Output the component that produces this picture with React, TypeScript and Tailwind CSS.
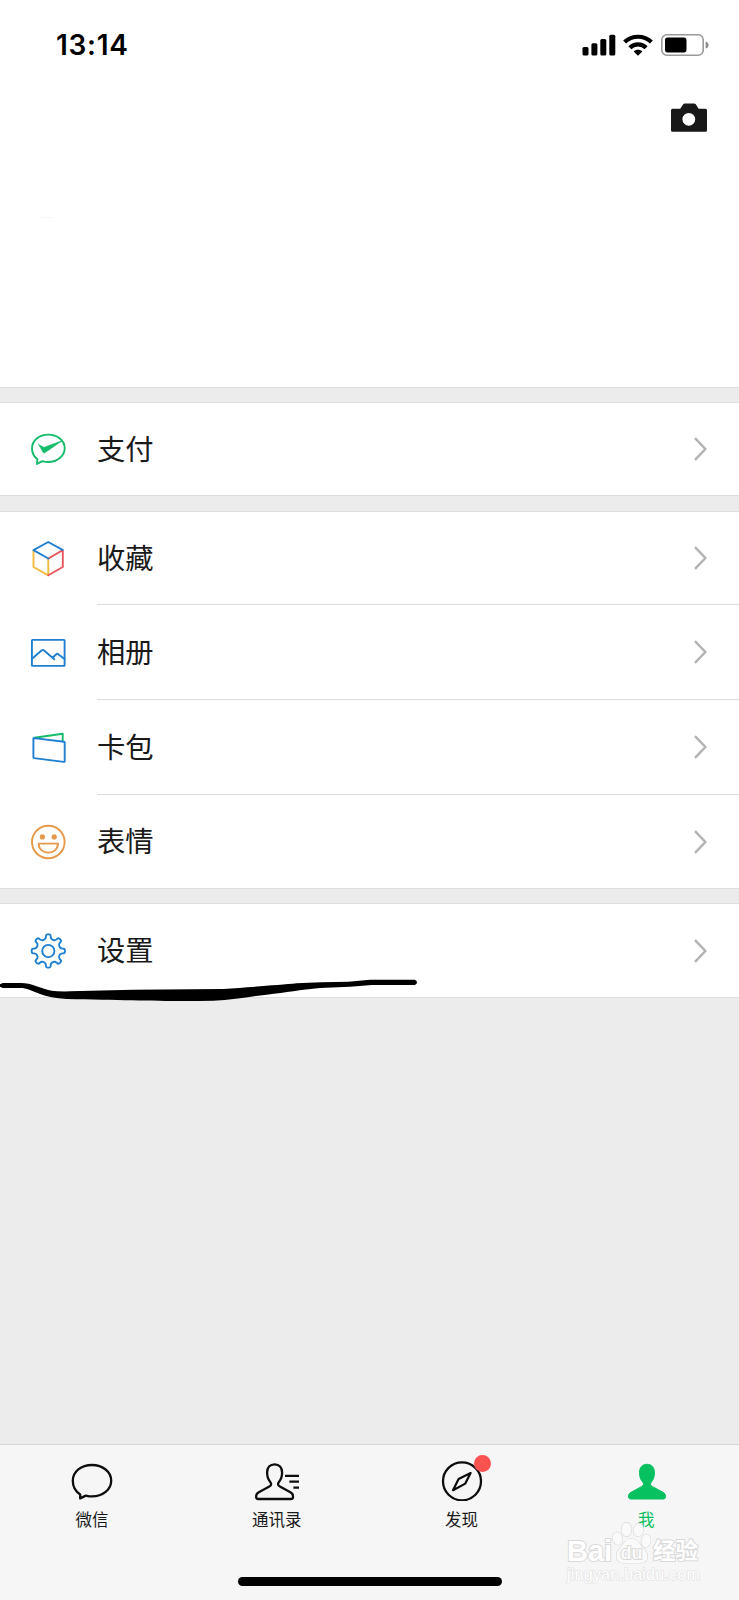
import type { ReactNode } from "react";
import clsx from "clsx";

const BLUE = "#1f7fd0";
const GREEN = "#14bb69";

// Outline of the settings cog: eight rounded teeth around (18.3, 18)
function cogPath() {
  const at = (r: number, deg: number) => {
    const a = (deg * Math.PI) / 180;
    return `${(18.3 + r * Math.cos(a)).toFixed(2)} ${(18 + r * Math.sin(a)).toFixed(2)}`;
  };
  let d = `M${at(12.2, -17)}`;
  for (let t = 0; t < 360; t += 45) {
    d += `Q${at(12.8, t - 11)} ${at(14.3, t - 9.5)}`;
    d += `Q${at(16.6, t - 9)} ${at(16.6, t - 3)}L${at(16.6, t + 3)}`;
    d += `Q${at(16.6, t + 9)} ${at(14.3, t + 9.5)}`;
    d += `Q${at(12.8, t + 11)} ${at(12.2, t + 17)}Q${at(11.9, t + 22.5)} ${at(12.2, t + 28)}`;
  }
  return d + "Z";
}

function RowIcon({ children, color }: { children: ReactNode; color?: string }) {
  return (
    <svg
      viewBox="0 0 36 36"
      className="w-9 h-9 shrink-0"
      fill="none"
      stroke={color}
      strokeWidth="1.9"
      strokeLinejoin="round"
      strokeLinecap="round"
    >
      {children}
    </svg>
  );
}

const payIcon = (
  <RowIcon color={GREEN}>
    <path d="M7.4 28.3C3.9 25.6 2 21.7 2 17.5C2 9.6 9.3 3.6 18.3 3.6s16.4 6 16.4 13.7s-7.4 13.7-16.4 13.7c-2.2 0-4.1-.3-5.9-.9L7 32.9z" />
    <path d="M8.9 13.6l4.3 2.5c.5.3 1 .3 1.5.1L32.500 9.600L15 21.600c-.9.6-1.500.5-2-.4z" fill={GREEN} strokeWidth=".7" />
  </RowIcon>
);

const favIcon = (
  <RowIcon>
    <path d="M3.5 9.8V26L18.3 34.3V17.7" stroke="#f2bc3f" />
    <path d="M18.3 34.3L32.8 26V9.1L18.3 17.5" stroke="#e8565d" />
    <path d="M18.3 17.5L3.5 9.1L18.2 1L32.6 8.9" stroke={BLUE} />
  </RowIcon>
);

const albumIcon = (
  <RowIcon color={BLUE}>
    <rect x="1.9" y="4.9" width="32.7" height="26" rx=".6" />
    <path d="M2 23.7L11.8 15.2q1-.7 2 0L24.3 24.3M22.5 22.8L26.3 19.2q1-.8 2 0L34.5 24.1" />
  </RowIcon>
);

const cardIcon = (
  <RowIcon color={BLUE}>
    <path d="M4.5 7.7L32.7 3.7V11.4" stroke={GREEN} />
    <path d="M3.4 8.8q0-.8.8-.7L34 11.8q.7.1.7.8V31.1q0 .9-.9.8L4.1 28.1q-.7-.1-.7-.8z" />
  </RowIcon>
);

const stickerIcon = (
  <RowIcon color="#e6994a">
    <circle cx="18.3" cy="18" r="16.3" />
    <circle cx="12.4" cy="12.9" r="2.6" fill="#e6994a" stroke="none" />
    <circle cx="24.2" cy="12.9" r="2.6" fill="#e6994a" stroke="none" />
    <path d="M8.6 19.6H28c0 5.4-4.3 9-9.7 9s-9.7-3.6-9.7-9z" />
  </RowIcon>
);

const settingsIcon = (
  <RowIcon color={BLUE}>
    <path d={cogPath()} />
    <circle cx="18.3" cy="18" r="6.1" />
  </RowIcon>
);

const groups = [
  [{ label: "支付", icon: payIcon, height: "h-[92px]" }],
  [
    { label: "收藏", icon: favIcon, height: "h-[93px]" },
    { label: "相册", icon: albumIcon, height: "h-[95px]" },
    { label: "卡包", icon: cardIcon, height: "h-[95px]" },
    { label: "表情", icon: stickerIcon, height: "h-[93px]" },
  ],
  [{ label: "设置", icon: settingsIcon, height: "h-[93px]" }],
];

const gaps = ["h-4", "h-[17px]", "h-4"];

function MenuRow({ label, icon, height, last }: { label: string; icon: ReactNode; height: string; last: boolean }) {
  return (
    <div className={clsx("flex items-stretch pl-[30px]", height)}>
      <div className="flex items-center w-[67px]">{icon}</div>
      <div className={clsx("flex flex-1 items-center justify-between pr-8", !last && "border-b border-[#dcdcdc]")}>
        <span className="pb-0.5 text-[28.3px] leading-none text-[#1a1a1a]">{label}</span>
        <svg viewBox="0 0 14 24" className="w-3.5 h-6" fill="none" stroke="#b2b2b2" strokeWidth="2.4">
          <path d="M2 1.2L12.4 12L2 22.8" />
        </svg>
      </div>
    </div>
  );
}

function StatusBar() {
  return (
    <div className="flex items-center justify-between h-[88px] pl-14 pr-[30px] pt-px">
      <span className="font-[Inter] text-[28px] font-semibold leading-none text-black tracking-[0.7px]">13:14</span>
      <div className="flex items-center">
        <svg viewBox="0 0 34 22" className="w-[34px] h-[22px]">
          <rect x=".5" y="13" width="6" height="8.5" rx="1.5" />
          <rect x="9.4" y="9.3" width="6" height="12.2" rx="1.5" />
          <rect x="18.3" y="5" width="6" height="16.5" rx="1.5" />
          <rect x="27.3" y=".7" width="6" height="20.8" rx="1.5" />
        </svg>
        <svg viewBox="0 0 30 22" className="w-[30px] h-[22px] ml-[7px]" fill="none" stroke="#000" strokeWidth="4.2">
          <path d="M1.6 8C9 1 21 1 28.4 8" />
          <path d="M6.9 13.7C11.4 9.3 18.6 9.3 23.1 13.7" />
          <path d="M10.6 17.4C13 15.2 17 15.2 19.4 17.4L15 21.8z" fill="#000" stroke="none" />
        </svg>
        <svg viewBox="0 0 48 22" className="w-12 h-[22px] ml-2">
          <rect x=".8" y=".8" width="41.4" height="20.4" rx="5" fill="none" stroke="#999" strokeWidth="1.6" />
          <rect x="4" y="3.6" width="21.5" height="14.8" rx="2.6" />
          <path d="M44.6 7.6c4 1 4 6 0 7z" fill="#8c8c8c" />
        </svg>
      </div>
    </div>
  );
}

const person =
  "M24 3.3c-4.7 0-7.5 3.3-7.5 8.2c0 4.300 1.100 7 3 9.200c1.700 2 1.300 3.700-.8 4.800L8.200 31.200c-2 1.100-2.600 2.100-2.600 3.900v.9q0 2 2 2h32.800q2 0 2-2v-.9c0-1.800-.6-2.800-2.600-3.900L29.300 25.500c-2.100-1.100-2.500-2.800-.8-4.800c1.900-2.200 3-4.900 3-9.200c0-4.900-2.800-8.200-7.500-8.200z";

const tabs = [
  {
    label: "微信",
    icon: <path d="M12.2 33.4C7.5 30.5 4.8 25.6 4.8 19.8C4.8 10.6 13.2 4 24 4s19.2 6.8 19.2 15.7S34.8 35.4 24 35.4c-1.8 0-3.6-.2-5.2-.6q-.8-.2-1.5.1L12.2 37.4z" />,
  },
  {
    label: "通讯录",
    icon: (
      <>
        <path d={person} transform="translate(-2.4 0)" />
        <path d="M32 14.8H46M36.4 20.7H46M40.4 26.7H46" />
      </>
    ),
  },
  {
    label: "发现",
    badge: true,
    icon: (
      <>
        <circle cx="24" cy="20.3" r="19" />
        <path d="M32.6 12L20.6 18.1L15 29.2L27.3 22.6z" strokeWidth="2.2" />
      </>
    ),
  },
  { label: "我", active: true, icon: <path d={person} fill="#07c160" stroke="#07c160" strokeWidth="1" /> },
];

function TabBar() {
  return (
    <nav className="relative flex h-[156px] border-t border-[#d6d6d6] bg-[#f6f6f6] pt-4">
      {tabs.map((tab) => (
        <div key={tab.label} className="flex flex-1 flex-col items-center">
          <div className="relative">
            <svg viewBox="0 0 48 40" className="w-12 h-10" fill="none" stroke="#0d0d0d" strokeWidth="2.3" strokeLinejoin="round">
              {tab.icon}
            </svg>
            {tab.badge && <span className="absolute -top-1.5 left-9 w-[17px] h-[17px] rounded-full bg-[#fa5151]" />}
          </div>
          <span className={clsx("mt-2.5 mr-px text-[16.5px] leading-none", tab.active ? "text-[#07c160]" : "text-[#1a1a1a]")}>
            {tab.label}
          </span>
        </div>
      ))}
      <div className="absolute left-1/2 bottom-3.5 -translate-x-1/2 w-[264px] h-[9px] rounded-full bg-black" />
      <Watermark />
    </nav>
  );
}

function Watermark() {
  return (
    <div className="absolute left-[567px] top-[74px] w-[134px] font-['Liberation_Sans','Noto_Sans_CJK_SC',sans-serif] text-white [paint-order:stroke_fill] [-webkit-text-stroke:2px_#d9d9d9]">
      <div className="flex items-end h-[46px]">
        <span className="w-[44px] text-[29px] font-bold leading-[28px]">Bai</span>
        <svg viewBox="0 0 40 44" className="w-10 h-11 shrink-0" fill="#fafafa" stroke="#d9d9d9" strokeWidth="1.200">
          <ellipse cx="6.5" cy="17.5" rx="4.8" ry="6.3" transform="rotate(-10 6.5 17.5)" />
          <ellipse cx="15.5" cy="8.5" rx="4.8" ry="6.8" />
          <ellipse cx="27.5" cy="9" rx="4.8" ry="6.5" transform="rotate(12 27.5 9)" />
          <ellipse cx="35" cy="20" rx="4.6" ry="6.3" transform="rotate(10 35 20)" />
          <path d="M20.5 17.500c-6 0-7 5-11 9c-5.500 5-6 15 3 15.500h17c9-.5 8-9.500 3-14.500c-4-4-6-10-12-10z" />
          <text x="20.5" y="37.500" textAnchor="middle" fontSize="18" fontWeight="bold" className="[-webkit-text-stroke:0]" strokeWidth="2">
            du
          </text>
        </svg>
        <span className="ml-0.5 text-[22.5px] font-bold leading-[26px] whitespace-nowrap">经验</span>
      </div>
      <div className="mt-px text-[16.2px] leading-[16px] tracking-[0.15px] [-webkit-text-stroke:1.200px_#e0e0e0]">jingyan.baidu.com</div>
    </div>
  );
}

export default function App() {
  return (
    <div className="relative flex flex-col w-[739px] h-[1600px] overflow-hidden bg-[#ececec] font-['Noto_Sans_CJK_SC',sans-serif]">
      <header className="h-[387px] bg-white">
        <StatusBar />
        <div className="flex justify-end pt-[15px] pr-8">
          <svg viewBox="0 0 36 29" className="w-9 h-[29px]">
            <path
              fillRule="evenodd"
              fill="#181818"
              d="M1.5 5.8H9.2L12.2 1.3Q12.9.4 14 .4H23Q24.1.4 24.8 1.3L27.6 5.8H34.5Q36 5.8 36 7.3V27.2Q36 28.7 34.5 28.7H1.5Q0 28.7 0 27.2V7.3Q0 5.8 1.5 5.8zM17.8 9.9a6.4 6.4 0 1 0 0 12.8a6.4 6.4 0 1 0 0-12.8z"
            />
          </svg>
        </div>
        <div className="mt-[85px] ml-10 w-3.5 h-px bg-[#f7f7f7]" />
      </header>

      {groups.map((rows, i) => (
        <section key={i}>
          <div className={clsx("border-y border-[#dedede]", gaps[i])} />
          <div className="bg-white">
            {rows.map((row, j) => (
              <MenuRow key={row.label} {...row} last={j === rows.length - 1} />
            ))}
          </div>
        </section>
      ))}
      <div className="flex-1 border-t border-[#dedede]" />

      <TabBar />

      {/* Hand-drawn marker line under the settings row */}
      <svg viewBox="0 0 1290 345" className="absolute left-0 top-[895px] w-[430px] h-[115px] pointer-events-none">
        <path d="M0 268L8 264H62C95 264 120 280 155 287Q175 290 210 289L400 284L670 282C740 277 840 270 890 265Q960 261 1045 260L1110 254H1244Q1251 256 1251 262Q1251 269 1244 270H1115L1050 275L960 279C900 284 860 293 800 299C750 305 700 315 640 317C520 320 400 316 200 312Q150 309 120 297C95 287 80 279 60 279H8L0 275z" />
      </svg>
    </div>
  );
}
